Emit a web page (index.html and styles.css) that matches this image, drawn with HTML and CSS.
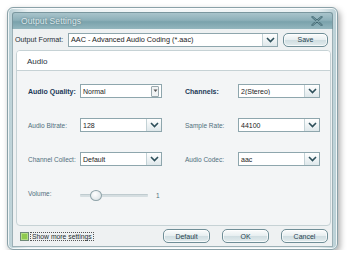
FILE: index.html
```html
<!DOCTYPE html>
<html lang="en">
<head>
    <meta charset="UTF-8">
    <title>Output Settings</title>
    <link rel="stylesheet" href="styles.css">
</head>
<body>

    <div class="window">
        <div class="titlebar">
            <span class="title">Output Settings</span>
            <svg class="close" width="12" height="10" viewBox="0 0 12 10">
                <path d="M1.5 1 L10.5 9 M10.5 1 L1.5 9" stroke="#3f6670" stroke-width="2.2" stroke-linecap="round"/>
                <path d="M1.5 1 L10.5 9 M10.5 1 L1.5 9" stroke="#8fb1b9" stroke-width="0.8" stroke-linecap="round"/>
            </svg>
        </div>

        <div class="content">
            <div class="format-row">
                <label class="format-label">Output Format:</label>
                <div class="select wide">
                    <span class="value">AAC - Advanced Audio Coding (*.aac)</span>
                    <span class="arrow"><svg width="9" height="6" viewBox="0 0 9 6"><path d="M1 1 L4.5 4.5 L8 1" fill="none" stroke="#2d4f5a" stroke-width="1.6"/></svg></span>
                </div>
                <button class="btn save">Save</button>
            </div>

            <div class="panel">
                <div class="panel-head">Audio</div>
                <div class="panel-body">
                    <div class="grid">
                        <label class="strong">Audio Quality:</label>
                        <div class="select">
                            <span class="value">Normal</span>
                            <span class="spin"><svg width="5" height="4" viewBox="0 0 5 4"><path d="M0.5 0.5 L2.5 3 L4.5 0.5 Z" fill="#555"/></svg></span>
                        </div>
                        <span></span>
                        <label class="strong">Channels:</label>
                        <div class="select">
                            <span class="value">2(Stereo)</span>
                            <span class="arrow"><svg width="9" height="6" viewBox="0 0 9 6"><path d="M1 1 L4.5 4.5 L8 1" fill="none" stroke="#2d4f5a" stroke-width="1.6"/></svg></span>
                        </div>

                        <label>Audio Bitrate:</label>
                        <div class="select">
                            <span class="value">128</span>
                            <span class="arrow"><svg width="9" height="6" viewBox="0 0 9 6"><path d="M1 1 L4.5 4.5 L8 1" fill="none" stroke="#2d4f5a" stroke-width="1.6"/></svg></span>
                        </div>
                        <span></span>
                        <label>Sample Rate:</label>
                        <div class="select">
                            <span class="value">44100</span>
                            <span class="arrow"><svg width="9" height="6" viewBox="0 0 9 6"><path d="M1 1 L4.5 4.5 L8 1" fill="none" stroke="#2d4f5a" stroke-width="1.6"/></svg></span>
                        </div>

                        <label>Channel Collect:</label>
                        <div class="select">
                            <span class="value">Default</span>
                            <span class="arrow"><svg width="9" height="6" viewBox="0 0 9 6"><path d="M1 1 L4.5 4.5 L8 1" fill="none" stroke="#2d4f5a" stroke-width="1.6"/></svg></span>
                        </div>
                        <span></span>
                        <label>Audio Codec:</label>
                        <div class="select">
                            <span class="value">aac</span>
                            <span class="arrow"><svg width="9" height="6" viewBox="0 0 9 6"><path d="M1 1 L4.5 4.5 L8 1" fill="none" stroke="#2d4f5a" stroke-width="1.6"/></svg></span>
                        </div>

                        <label>Volume:</label>
                        <div class="volume">
                            <div class="slider">
                                <div class="track"></div>
                                <div class="thumb"></div>
                            </div>
                            <span class="vol-value">1</span>
                        </div>
                    </div>
                </div>
            </div>

            <div class="footer">
                <label class="more">
                    <span class="check"></span>
                    <span class="more-text">Show more settings</span>
                </label>
                <div class="buttons">
                    <button class="btn">Default</button>
                    <button class="btn">OK</button>
                    <button class="btn">Cancel</button>
                </div>
            </div>
        </div>
    </div>

</body>
</html>
```

FILE: styles.css
```css
body {
    margin: 0;
    padding: 0;
    background: #ffffff;
    font-family: 'Liberation Sans', Arial, sans-serif;
    font-size: 7.5px;
    color: #34525e;
}

.window {
    margin: 7px 0 0 7px;
    width: 321px;
    height: 233px;
    padding: 4px;
    border: 1px solid #8aa1a8;
    border-radius: 6px;
    background: linear-gradient(to right, #b7ced4 0%, #e9f0f2 6%, #f4f7f8 50%, #e9f0f2 94%, #b7ced4 100%);
    box-shadow: 2px 3px 6px rgba(0, 0, 0, 0.35), inset 0 0 0 1px rgba(255, 255, 255, 0.8);
    display: flex;
    flex-direction: column;
}

.titlebar {
    height: 16px;
    flex: none;
    display: flex;
    align-items: center;
    justify-content: space-between;
    padding: 0 9px 0 8px;
    border-radius: 3px 3px 0 0;
    background: linear-gradient(to bottom, #a9c4cb 0%, #8db0b9 45%, #7aa2ac 55%, #93b6be 100%);
    border: 1px solid #7a979f;
    border-bottom: none;
}

.title {
    font-size: 8.5px;
    color: #dde8eb;
    text-shadow: 0 0 2px rgba(40, 70, 80, 0.6);
    letter-spacing: 0.1px;
}

.close {
    display: block;
}

.content {
    flex: 1;
    background: #eef1f2;
    border: 1px solid #9cb0b6;
    border-top: none;
    padding: 3px 4px 3px 2px;
    display: flex;
    flex-direction: column;
}

.format-row {
    display: flex;
    align-items: center;
    height: 15px;
}

.format-label {
    width: 53px;
    font-size: 7.2px;
    color: #1f2f36;
}

.select {
    width: 82px;
    height: 14px;
    box-sizing: border-box;
    border: 1px solid #8ea6ad;
    background: #ffffff;
    display: flex;
    align-items: center;
    font-size: 7px;
    color: #1c1c1c;
}

.select.wide {
    width: 210px;
    font-size: 7.3px;
}

.select .value {
    flex: 1;
    padding-left: 2px;
    white-space: nowrap;
    overflow: hidden;
}

.select .arrow {
    width: 14px;
    height: 12px;
    border-left: 1px solid #c3d2d6;
    background: linear-gradient(to bottom, #ffffff, #dfe8eb);
    display: flex;
    align-items: center;
    justify-content: center;
}

.select .spin {
    width: 6px;
    height: 9px;
    margin-right: 2px;
    border: 1px solid #9aa9ae;
    border-radius: 1px;
    background: #f1f3f4;
    display: flex;
    align-items: center;
    justify-content: center;
}

.btn {
    font-family: 'Liberation Sans', Arial, sans-serif;
    font-size: 7px;
    color: #27434e;
    height: 14px;
    padding: 0;
    border: 1px solid #6f8e97;
    border-radius: 5px;
    background: linear-gradient(to bottom, #fbfcfc 0%, #e6eef0 50%, #cfdde1 51%, #e3ecee 100%);
    box-shadow: inset 0 0 0 1px rgba(255, 255, 255, 0.7);
}

.save {
    width: 45px;
    margin-left: 5px;
}

.panel {
    margin-top: 3px;
    width: 315px;
    height: 176px;
    box-sizing: border-box;
    margin-left: 1px;
    border: 1px solid #c6d2d5;
    border-radius: 4px;
    background: #f3f5f6;
    overflow: hidden;
    display: flex;
    flex-direction: column;
}

.panel-head {
    height: 20px;
    flex: none;
    box-sizing: border-box;
    padding: 6px 0 0 10px;
    background: #ffffff;
    border-bottom: 1px solid #c6d2d5;
    font-size: 8px;
    color: #1f3340;
}

.panel-body {
    padding: 13px 0 0 11px;
}

.grid {
    display: grid;
    grid-template-columns: 52px 82px 23px 53px 82px;
    grid-auto-rows: 14px;
    row-gap: 20px;
    align-items: center;
}

.grid label {
    font-size: 6.5px;
    color: #4f6f7c;
    white-space: nowrap;
}

.grid label.strong {
    font-size: 7px;
    font-weight: bold;
    color: #1d3a58;
}

.volume {
    display: flex;
    align-items: center;
    margin-top: 4px;
}

.slider {
    position: relative;
    width: 68px;
    height: 14px;
}

.track {
    position: absolute;
    left: 0;
    right: 0;
    top: 6px;
    height: 2px;
    border-radius: 1px;
    background: #d5dee1;
    border-top: 1px solid #bfcbcf;
}

.thumb {
    position: absolute;
    left: 10px;
    top: 2px;
    width: 10px;
    height: 9px;
    border-radius: 50%;
    border: 1px solid #8fa3a9;
    background: radial-gradient(circle at 40% 35%, #ffffff, #d3dde0);
}

.vol-value {
    padding-left: 8px;
    font-size: 6.5px;
    color: #4f6f7c;
}

.footer {
    display: flex;
    align-items: center;
    justify-content: space-between;
    margin-top: 3px;
    height: 14px;
}

.more {
    display: flex;
    align-items: center;
    padding-left: 5px;
}

.check {
    width: 7px;
    height: 7px;
    border: 1px solid #6f8a78;
    background: #8fca4e;
    box-shadow: inset 0 0 0 1px #b5e083;
}

.more-text {
    margin-left: 1px;
    padding: 0 1px;
    border: 1px dotted #555;
    font-size: 6.8px;
    color: #1c2b30;
}

.buttons {
    display: flex;
    gap: 12px;
}

.buttons .btn {
    width: 47px;
}
```
